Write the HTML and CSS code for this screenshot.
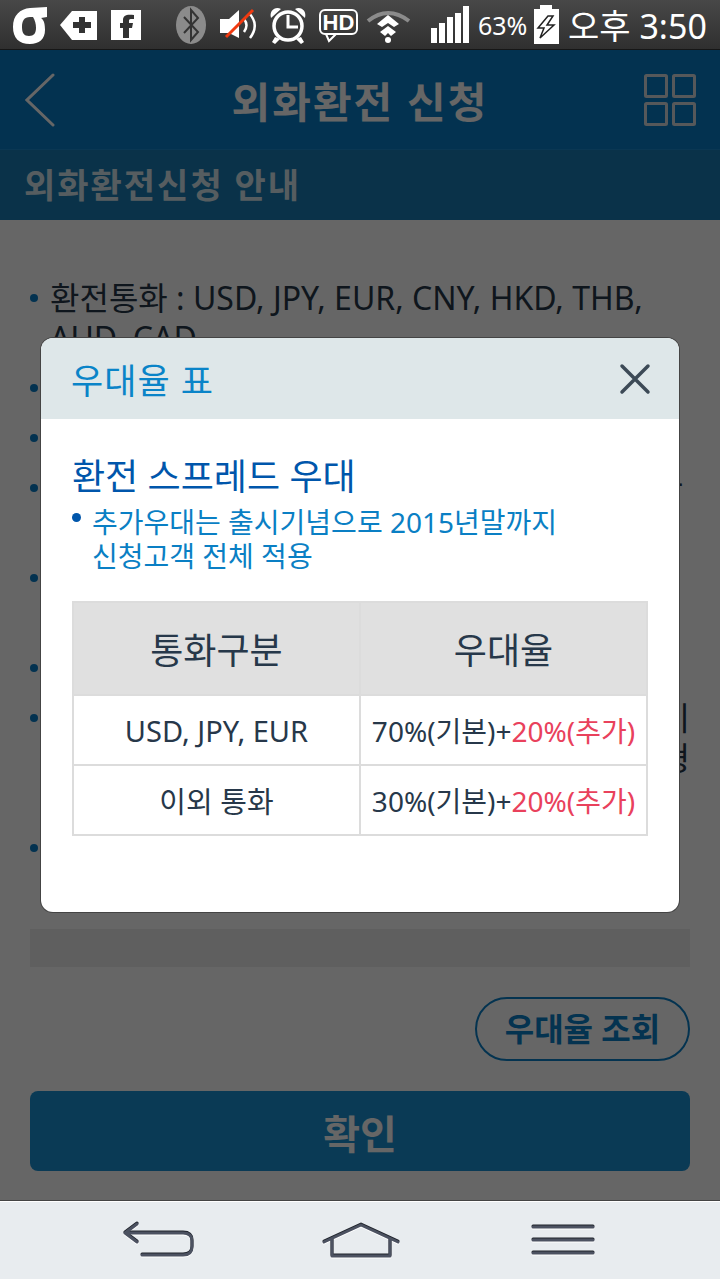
FILE: index.html
```html
<!DOCTYPE html>
<html lang="ko">
<head>
    <meta charset="UTF-8">
    <meta name="viewport" content="width=device-width, initial-scale=1.0">
    <title>외화환전 신청</title>
    <link rel="stylesheet" href="styles.css">
</head>
<body>
    <div class="screen">
        <!-- 상태바 -->
        <div class="status-bar">
            <svg class="status-icons" width="472" height="50" viewBox="0 0 472 50">
                <path fill="#fff" fill-rule="evenodd" d="M47 7V17L41 18C44 20 45 24 45 30C45 39 39 44 30 44C19 44 13 38 13 27C13 15 20 9 30 8ZM30 17C24 17 22 21 22 27C22 33 24 36 29 36C34 36 36 33 36 28C36 24 35 20 33 17Z"/>
                <path fill="#fff" d="M60 25L72 11H97V40H72Z"/>
                <path fill="#333" d="M79 17H85V22H91V28H85V33H79V28H73V22H79Z"/>
                <rect x="111" y="10" width="30" height="30" fill="#fff"/>
                <path fill="#333" d="M123 38V28H120V23H123V20C123 15 127 14 134 15V19C130 19 129 19 129 21V23H133L132 28H129V38Z"/>
                <ellipse cx="191" cy="25" rx="15" ry="19" fill="#8b8b8b"/>
                <path fill="none" stroke="#333" stroke-width="2" d="M184 17L198 32L191 40V10L198 18L184 33"/>
                <path fill="#fff" d="M220 19H229L239 10V38L229 33H220Z"/>
                <path fill="none" stroke="#fff" stroke-width="2.5" d="M244 19Q249 25 244 32M249 13Q260 25 250 38"/>
                <path stroke="#f03a10" stroke-width="3" d="M226 37L253 10"/>
                <circle cx="288" cy="26" r="14" fill="none" stroke="#fff" stroke-width="3.5"/>
                <path fill="#fff" d="M271 18C269 11 275 6 281 9ZM305 18C307 11 301 6 295 9ZM275 37L272 42L275 44L280 39ZM301 37L304 42L301 44L296 39Z"/>
                <path fill="none" stroke="#fff" stroke-width="3" d="M288 15V27H298"/>
                <rect x="320" y="10" width="37" height="24" rx="5" fill="none" stroke="#fff" stroke-width="2"/>
                <path fill="none" stroke="#fff" stroke-width="2" d="M326 34L329 41L336 34"/>
                <text class="hd-label" x="338.500" y="30" text-anchor="middle">HD</text>
                <path fill="none" stroke="#8b8b8b" stroke-width="4" d="M368 21Q388 5 409 21"/>
                <path fill="#fff" d="M388 15L377 24L382 27L388 23L394 27L399 24Z"/>
                <path fill="#fff" d="M388 26L380 32L385 36L388 33L391 36L396 32Z"/>
                <circle cx="388" cy="40" r="3" fill="#fff"/>
                <rect x="431" y="28" width="6" height="15" fill="#fff"/>
                <rect x="439" y="23" width="6" height="20" fill="#fff"/>
                <rect x="447" y="17" width="6" height="26" fill="#fff"/>
                <rect x="455" y="13" width="6" height="30" fill="#fff"/>
                <rect x="463" y="6" width="6" height="37" fill="#fff"/>
            </svg>
            <span class="battery-text">63%</span>
            <svg class="battery" width="25" height="40" viewBox="0 0 25 40">
                <path fill="#fff" d="M6 0H18V4H25V39H0V4H6Z"/>
                <path fill="#fff" stroke="#222" stroke-width="1.500" d="M14 11L4 23H10L6 33L20 20H13L19 11Z"/>
            </svg>
            <span class="clock">오후 3:50</span>
        </div>

        <div class="main">
            <div class="app-header">
                <svg class="back-icon" width="30" height="54" viewBox="0 0 30 54">
                    <path fill="none" stroke="#fff" stroke-width="3" stroke-linecap="round" d="M28 2L2 27L28 52"/>
                </svg>
                <h1>외화환전 신청</h1>
                <svg class="grid-icon" width="52" height="52" viewBox="0 0 52 52">
                    <g fill="none" stroke="#d8dde0" stroke-width="3">
                        <rect x="1.500" y="1.500" width="21" height="21" rx="1"/>
                        <rect x="29.500" y="1.500" width="21" height="21" rx="1"/>
                        <rect x="1.500" y="29.500" width="21" height="21" rx="1"/>
                        <rect x="29.500" y="29.500" width="21" height="21" rx="1"/>
                    </g>
                </svg>
            </div>
            <div class="sub-header">외화환전신청 안내</div>

            <div class="content">
                <ul class="guide-list">
                    <li><div>환전통화 : USD, JPY, EUR, CNY, HKD, THB,<br>AUD, CAD</div></li>
                    <li><div>&nbsp;</div></li>
                    <li><div>&nbsp;</div></li>
                    <li><div class="lines"><span class="edge edge-dash">-</span><span>&nbsp;</span></div></li>
                    <li><div class="lines"><span>&nbsp;</span><span>&nbsp;</span></div></li>
                    <li><div>&nbsp;</div></li>
                    <li><div class="lines"><span class="edge">이</span><span class="edge">형</span><span>&nbsp;</span></div></li>
                    <li><div class="lines"><span>&nbsp;</span><span>&nbsp;</span></div></li>
                </ul>
                <div class="notice-bar"></div>
                <div class="rate-row">
                    <div class="rate-button">우대율 조회</div>
                </div>
                <div class="confirm-button">확인</div>
            </div>

            <div class="dim"></div>

            <!-- 우대율 팝업 -->
            <div class="modal">
                <div class="modal-header">
                    <h2>우대율 표</h2>
                    <svg class="close-icon" width="32" height="32" viewBox="0 0 32 32">
                        <path fill="none" stroke="#3c4a56" stroke-width="3.500" stroke-linecap="round" d="M3 3L29 29M29 3L3 29"/>
                    </svg>
                </div>
                <div class="modal-body">
                    <h3>환전 스프레드 우대</h3>
                    <p class="modal-note">추가우대는 출시기념으로 2015년말까지<br>신청고객 전체 적용</p>
                    <table class="rate-table">
                        <tr>
                            <th>통화구분</th>
                            <th>우대율</th>
                        </tr>
                        <tr>
                            <td class="currency">USD, JPY, EUR</td>
                            <td>70%(기본)+<span class="extra">20%(추가)</span></td>
                        </tr>
                        <tr>
                            <td class="currency">이외 통화</td>
                            <td>30%(기본)+<span class="extra">20%(추가)</span></td>
                        </tr>
                    </table>
                </div>
            </div>
        </div>

        <div class="nav-bar">
            <svg width="72" height="38" viewBox="0 0 72 38">
                <path fill="none" stroke="#4c5261" stroke-width="3" stroke-linecap="round" stroke-linejoin="round" d="M14 3L2 12L14 21M2 12H60C66 12 69 15 69 20V26C69 31 66 34 60 34H19"/>
            </svg>
            <svg width="78" height="38" viewBox="0 0 78 38">
                <path fill="none" stroke="#4c5261" stroke-width="3" stroke-linecap="round" stroke-linejoin="round" d="M2 21L39 4L76 21M10 18V35H68V18"/>
            </svg>
            <svg width="64" height="32" viewBox="0 0 64 32">
                <path stroke="#4c5261" stroke-width="3" stroke-linecap="round" d="M2 3H62M2 16H62M2 29H62"/>
            </svg>
        </div>
    </div>
</body>
</html>
```

FILE: styles.css
```css
body {
    margin: 0;
    background-color: #fff;
    font-family: "Noto Sans", "Noto Sans CJK KR", sans-serif;
    color: #27384a;
}

h1, h2, h3, p, ul {
    margin: 0;
    padding: 0;
}

.screen {
    width: 720px;
    height: 1279px;
    display: flex;
    flex-direction: column;
    overflow: hidden;
}

/* 상태바 */
.status-bar {
    height: 49px;
    flex: none;
    display: flex;
    align-items: center;
    background: linear-gradient(#484848, #2f2f2f);
    border-bottom: 1px solid #161616;
    color: #fff;
}

.status-icons {
    flex: none;
}

.hd-label {
    font-family: "Liberation Sans", sans-serif;
    font-size: 22px;
    font-weight: bold;
    fill: #fff;
}

.battery-text {
    margin-left: 6px;
    width: 50px;
    font-size: 25px;
}

.battery {
    margin-left: 6px;
    flex: none;
}

.clock {
    margin-left: 9px;
    font-size: 34px;
    white-space: nowrap;
}

.main {
    position: relative;
    height: 1150px;
    flex: none;
    background-color: #fff;
}

.app-header {
    height: 99px;
    display: flex;
    align-items: center;
    justify-content: space-between;
    padding: 0 24px 0 25px;
    background-color: #087dc8;
    border-bottom: 1px solid #1a8bd0;
}

.back-icon {
    margin-right: 21px;
}

.app-header h1 {
    font-size: 42px;
    font-weight: bold;
    letter-spacing: 2px;
    color: #fff;
}

.sub-header {
    height: 70px;
    line-height: 70px;
    padding-left: 24px;
    background-color: #197db6;
    color: #d8e8f0;
    font-size: 34px;
    font-weight: bold;
    letter-spacing: 2px;
}

.content {
    padding: 58px 30px 0;
}

.guide-list {
    list-style: none;
    height: 651px;
    font-size: 32px;
    line-height: 40px;
}

.guide-list li {
    display: flex;
    margin-bottom: 10px;
}

.guide-list li::before {
    content: "";
    flex: none;
    width: 8px;
    height: 8px;
    margin: 16px 12px 0 0;
    border-radius: 50%;
    background-color: #087dc8;
}

.guide-list li > div {
    flex: 1;
}

.lines {
    display: flex;
    flex-direction: column;
}

.edge {
    text-align: right;
}

.edge-dash {
    padding-right: 7px;
    line-height: 28px;
    height: 40px;
}

.notice-bar {
    height: 38px;
    background-color: #eee;
}

.rate-row {
    display: flex;
    justify-content: flex-end;
    margin-top: 30px;
}

.rate-button {
    width: 215px;
    height: 64px;
    box-sizing: border-box;
    line-height: 60px;
    text-align: center;
    border: 2px solid #0a80c8;
    border-radius: 32px;
    background-color: #fff;
    color: #0a80c8;
    font-size: 32px;
    font-weight: bold;
}

.confirm-button {
    height: 80px;
    line-height: 85px;
    margin-top: 30px;
    text-align: center;
    border-radius: 8px;
    background-color: #1991d4;
    color: #fff;
    font-size: 40px;
    font-weight: bold;
}

.dim {
    position: absolute;
    inset: 0;
    background-color: rgba(0, 0, 0, 0.6);
}

/* 팝업 */
.modal {
    position: absolute;
    top: 288px;
    left: 41px;
    width: 638px;
    height: 574px;
    border-radius: 12px;
    background-color: #fff;
    box-shadow: 0 0 0 1px #444;
    overflow: hidden;
}

.modal-header {
    height: 81px;
    display: flex;
    align-items: center;
    justify-content: space-between;
    padding: 0 28px 0 30px;
    background-color: #dee7e9;
}

.modal-header h2 {
    font-size: 35px;
    font-weight: normal;
    color: #0a84c8;
    letter-spacing: 1px;
}

.modal-body {
    padding: 36px 31px 0;
}

.modal-body h3 {
    font-size: 36px;
    line-height: 44px;
    font-weight: normal;
    color: #0056ab;
}

.modal-note {
    display: flow-root;
    margin-top: 6px;
    padding-left: 20px;
    font-size: 28px;
    line-height: 34px;
    color: #0a7fc4;
}

.modal-note::before {
    content: "";
    float: left;
    width: 9px;
    height: 9px;
    margin: 8px 0 0 -20px;
    border-radius: 50%;
    background-color: #0056ab;
}

.rate-table {
    width: 576px;
    margin-top: 28px;
    border-collapse: collapse;
    table-layout: fixed;
}

.rate-table th,
.rate-table td {
    padding: 0;
    border: 2px solid #dcdcdc;
    text-align: center;
    white-space: nowrap;
}

.rate-table th {
    height: 91px;
    background-color: #e0e0e0;
    font-size: 36px;
    font-weight: normal;
}

.rate-table td {
    height: 68px;
    font-size: 28px;
}

.rate-table .currency {
    font-size: 29px;
}

.extra {
    color: #e9415c;
}

/* 하단 네비게이션 */
.nav-bar {
    height: 79px;
    flex: none;
    display: grid;
    grid-template-columns: 199px 209px 64px;
    align-items: center;
    justify-items: start;
    padding-left: 123px;
    box-sizing: border-box;
    background-color: #e8ecef;
    border-top: 1px solid #444;
    box-shadow: inset 0 1px #fff;
}

.nav-bar svg {
    filter: drop-shadow(0 -1px 0 #20242c) drop-shadow(0 1px 0 #fff);
}
```
